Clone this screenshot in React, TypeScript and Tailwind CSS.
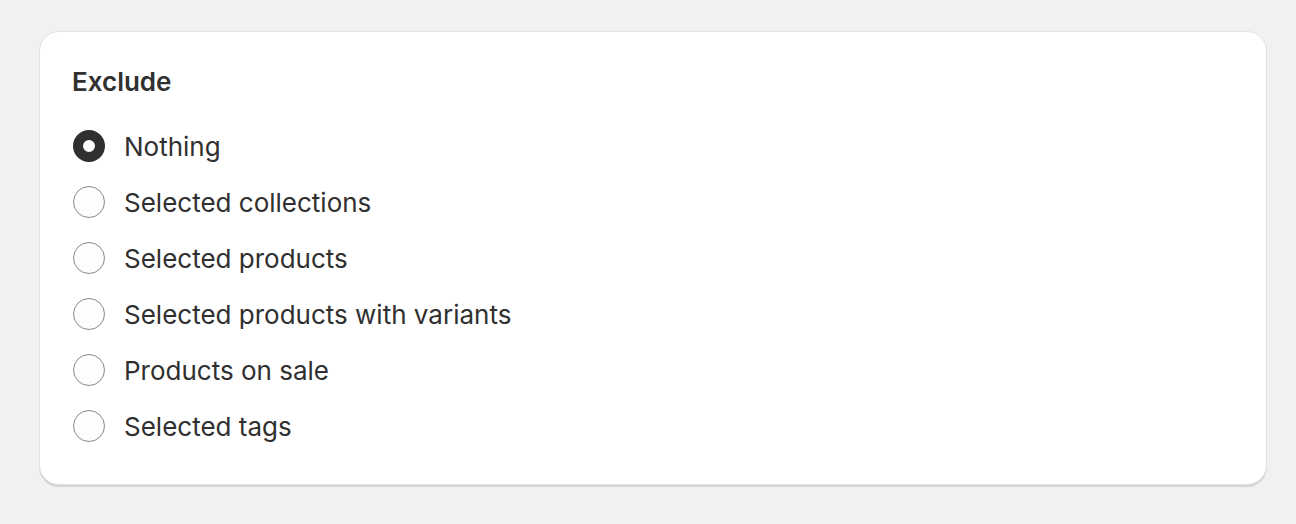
import { useState } from "react";

const options = [
  "Nothing",
  "Selected collections",
  "Selected products",
  "Selected products with variants",
  "Products on sale",
  "Selected tags",
];

const Radio = ({ checked }: { checked: boolean }) =>
  checked ? (
    <span className="box-border w-[32px] h-[32px] rounded-full border-[10px] border-[#303030] bg-white shrink-0" />
  ) : (
    <span className="box-border w-[32px] h-[32px] rounded-full border border-[#8a8a8a] bg-[#fdfdfd] shrink-0" />
  );

export default function App() {
  const [selected, setSelected] = useState("Nothing");

  return (
    <div
      className="min-h-[524px] bg-[#f1f1f1] pt-[31px] pl-[39px] pr-[29px] text-[#303030]"
      style={{ fontFamily: "Inter, 'Noto Sans', sans-serif" }}
    >
      <div className="bg-white rounded-[20px] border border-[#e3e3e3] shadow-[0_2px_0_0_#d4d4d4] pt-[31px] pb-[30px] px-[32px]">
        <h2 className="text-[26px] leading-[38px] font-semibold mb-[17px]">Exclude</h2>
        <div className="flex flex-col">
          {options.map(opt => (
            <label
              key={opt}
              className="h-[56px] flex items-center gap-[19px] cursor-pointer"
              onClick={() => setSelected(opt)}
            >
              <span className="pl-px flex">
                <Radio checked={selected === opt} />
              </span>
              <span className="text-[26px]">{opt}</span>
            </label>
          ))}
        </div>
      </div>
    </div>
  );
}
